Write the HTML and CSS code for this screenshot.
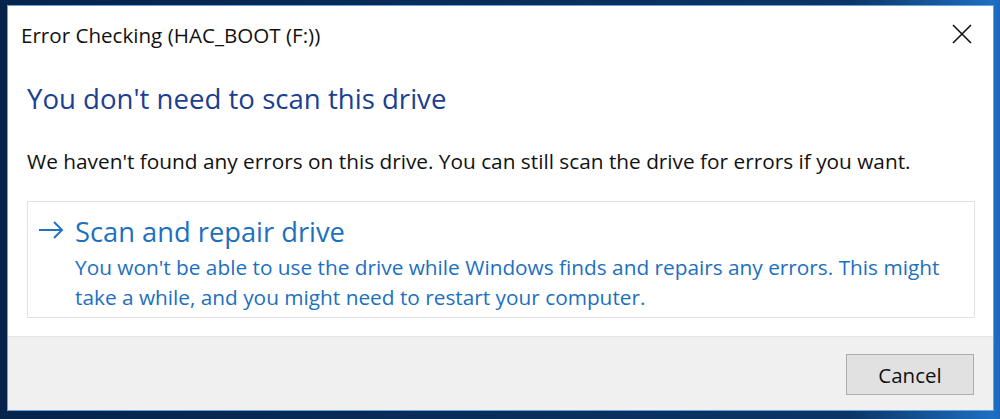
FILE: index.html
```html
<!DOCTYPE html>
<html>
<head>
    <title>Error Checking (HAC_BOOT (F:))</title>
    <link rel="stylesheet" href="styles.css">
</head>
<body>
    <div class="window">
        <div class="titlebar">
            <span class="title">Error Checking (HAC_BOOT (F:))</span>
            <svg class="close" width="20" height="20" viewBox="0 0 20 20">
                <path d="M1 1 L19 19 M19 1 L1 19" stroke="#111" stroke-width="1.6" fill="none"/>
            </svg>
        </div>

        <div class="content">
            <h1 class="instruction">You don't need to scan this drive</h1>
            <p class="message">We haven't found any errors on this drive. You can still scan the drive for errors if you want.</p>

            <div class="command">
                <svg class="arrow" width="26" height="20" viewBox="0 0 26 20">
                    <path d="M1 10 H24 M16 2 L24 10 L16 18" stroke="#1f73c4" stroke-width="2" fill="none"/>
                </svg>
                <div class="command-text">
                    <div class="command-title">Scan and repair drive</div>
                    <div class="command-note">You won't be able to use the drive while Windows finds and repairs any errors. This might<br>take a while, and you might need to restart your computer.</div>
                </div>
            </div>
        </div>

        <div class="footer">
            <button class="cancel">Cancel</button>
        </div>
    </div>
</body>
</html>
```

FILE: styles.css
```css
html, body {
    margin: 0;
    height: 419px;
    overflow: hidden;
}

body {
    background: linear-gradient(90deg, #06234a 0%, #0b3566 85%, #1d6fc2 99.3%, #1b69bd 100%);
    font-family: 'Open Sans', 'Noto Sans', sans-serif;
    padding: 5px 6px 8px 7px;
    box-sizing: border-box;
}

.window {
    height: 100%;
    background-color: #fff;
    border: 1px solid #6aa3dc;
    box-sizing: border-box;
    display: flex;
    flex-direction: column;
}

.titlebar {
    display: flex;
    align-items: center;
    justify-content: space-between;
    height: 56px;
    padding: 0 21px 0 13px;
    flex-shrink: 0;
}

.title {
    font-size: 20.6px;
    color: #111;
    margin-top: 1px;
}

.close {
    margin-top: 0;
}

.content {
    flex: 1;
    padding: 0 18px 0 19px;
}

.instruction {
    margin: 19px 0 0;
    font-size: 27.6px;
    line-height: 34px;
    font-weight: normal;
    color: #1b3f92;
}

.message {
    margin: 32px 0 0;
    font-size: 20.8px;
    line-height: 28px;
    color: #111;
}

.command {
    margin-top: 26px;
    border: 1px solid #dfe3e8;
    height: 117px;
    box-sizing: border-box;
    display: flex;
    padding: 13px 10px 0 10px;
}

.arrow {
    margin-top: 5px;
    flex-shrink: 0;
}

.command-text {
    margin-left: 11px;
}

.command-title {
    font-size: 27.3px;
    color: #1d6fc0;
    line-height: 34px;
}

.command-note {
    font-size: 20.8px;
    color: #1d6fc0;
    line-height: 30px;
    margin-top: 3px;
}

.footer {
    height: 74px;
    background-color: #f0f0f0;
    border-top: 1px solid #e4e4e4;
    display: flex;
    justify-content: flex-end;
    align-items: flex-start;
    padding: 17px 19px 0 0;
    box-sizing: border-box;
    flex-shrink: 0;
}

.cancel {
    width: 128px;
    height: 41px;
    background-color: #e1e1e1;
    border: 1px solid #adadad;
    font-family: 'Open Sans', 'Noto Sans', sans-serif;
    font-size: 20.5px;
    color: #111;
    padding: 0;
}
```
